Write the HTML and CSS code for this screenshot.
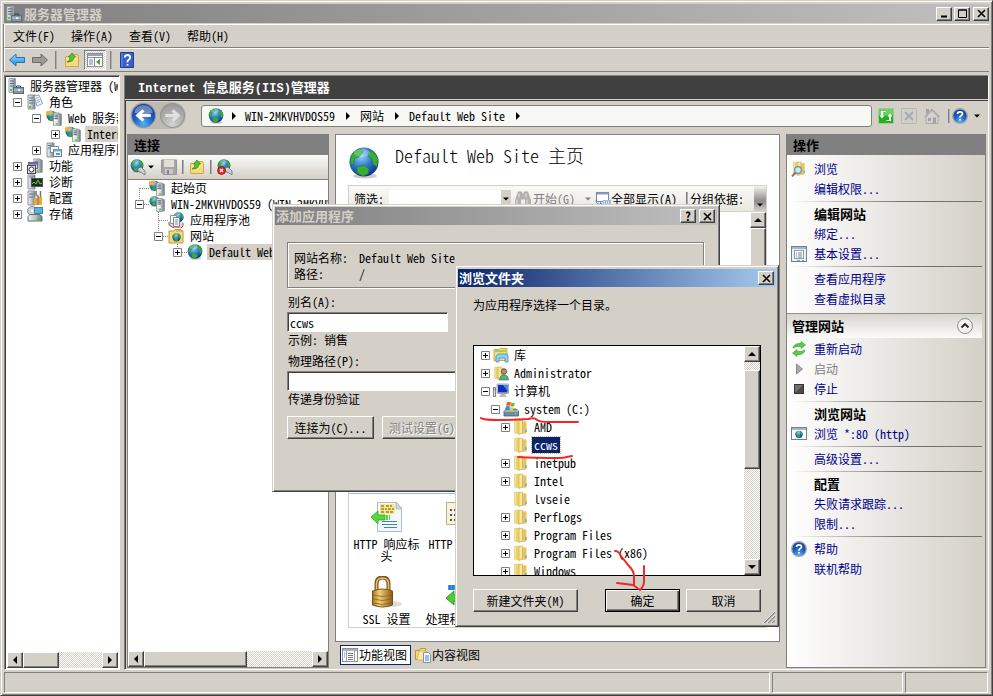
FILE: index.html
```html
<!DOCTYPE html>
<html lang="zh-CN">
<head>
<meta charset="utf-8">
<meta name="viewport" content="width=device-width, initial-scale=1">
<title>服务器管理器</title>
<link rel="stylesheet" href="styles.css">
</head>
<body>
<svg class="defs" aria-hidden="true">
  <defs>
    <radialGradient id="sea" cx="0.4" cy="0.3" r="0.75"><stop offset="0" stop-color="#8fd4f5"/><stop offset="0.5" stop-color="#2f78d0"/><stop offset="1" stop-color="#102a86"/></radialGradient>
    <radialGradient id="blueball" cx="0.5" cy="0.85" r="0.85"><stop offset="0" stop-color="#4fb4f5"/><stop offset="0.5" stop-color="#1c5cc4"/><stop offset="1" stop-color="#16367f"/></radialGradient>
    <radialGradient id="grayball" cx="0.5" cy="0.85" r="0.85"><stop offset="0" stop-color="#d2d2d2"/><stop offset="0.6" stop-color="#acacac"/><stop offset="1" stop-color="#989898"/></radialGradient>
    <linearGradient id="gold" x2="1"><stop offset="0" stop-color="#fbeeab"/><stop offset="0.5" stop-color="#e9cb62"/><stop offset="1" stop-color="#f7e28c"/></linearGradient>
    <linearGradient id="steel" x2="1"><stop offset="0" stop-color="#f2f4f5"/><stop offset="0.6" stop-color="#b3babf"/><stop offset="1" stop-color="#70787e"/></linearGradient>
    <linearGradient id="brass" x2="1"><stop offset="0" stop-color="#a8741c"/><stop offset="0.35" stop-color="#f0cf7a"/><stop offset="1" stop-color="#8a5a12"/></linearGradient>
    <linearGradient id="bluearrow" y2="1" x2="0"><stop offset="0" stop-color="#8fe0ff"/><stop offset="1" stop-color="#1a86d8"/></linearGradient>
  </defs>
  <symbol id="globe" viewBox="0 0 32 32"><ellipse cx="17" cy="29" rx="12" ry="2.5" fill="#999" opacity="0.5"/><circle cx="16" cy="15" r="14.5" fill="url(#sea)"/><path d="M3 9Q7 2 13 2l2 3-4 5-4 1-2 7-3-2zM22 3q6 3 8 9l-1 8-4-3-1-5-4-3zM9 20l7-2 5 4-1 5-5 2-6-3z" fill="#39ad35" stroke="#1d7f39" stroke-width="0.7"/><ellipse cx="14" cy="6" rx="8" ry="4" fill="#fff" opacity="0.25"/></symbol>
  <symbol id="server" viewBox="0 0 16 16"><path d="M4 1h6l3 1.5V15l-3 1H4z" fill="url(#steel)" stroke="#7c858a" stroke-width="0.8"/><path d="M5 3.5h4M5 5.5h4M5 7.5h4" stroke="#5d666c"/><path d="M5 9.5h4M5 11.5h4" stroke="#fff"/><rect x="7" y="13" width="2" height="1.5" fill="#4fcf2c"/></symbol>
  <symbol id="server-case" viewBox="0 0 16 16"><path d="M1 0.5h6.500v14H1z" fill="url(#steel)" stroke="#9aa3a8"/><path d="M2 3h4M2 5.500h4M2 8h4" stroke="#4f6d7d"/><rect x="2" y="11" width="2" height="2" fill="#4fcf2c"/><path d="M8.500 9.500V8h4v1.500" fill="none" stroke="#333d45"/><rect x="5.500" y="9.500" width="10" height="6" fill="#8296a4" stroke="#5b6b77"/><path d="M6 12h9" stroke="#c8d4dc"/><path d="M10 11h2v2h-2z" fill="#eee"/></symbol>
  <symbol id="server-doc" viewBox="0 0 16 16"><path d="M1 1h7v14H1z" fill="url(#steel)" stroke="#8c959a"/><path d="M2 4h4M2 6.500h4M2 9h4" stroke="#65747d"/><rect x="2" y="12" width="2" height="2" fill="#4fcf2c"/><path d="M7 2l5-1 3.500 8.500-5.500 2.500z" fill="#eaf4fc" stroke="#7292aa" stroke-width="0.8"/><path d="M8.500 4.500l3-1M9.500 6.500l3-1M10 8.500l3-1" stroke="#5f96c2" stroke-width="0.7"/></symbol>
  <symbol id="globe-server" viewBox="0 0 16 16"><use href="#globe" x="0" y="0" width="11" height="12"/><path d="M0 1.500l4-1 3 1.500-3 2.500-4 1z" fill="#f2b22c"/><use href="#server" x="4" y="2" width="14" height="14"/></symbol>
  <symbol id="globe-host" viewBox="0 0 16 16"><use href="#globe" x="0" y="0" width="11" height="11"/><use href="#server" x="4" y="1" width="14" height="15"/></symbol>
  <symbol id="server-app" viewBox="0 0 16 16"><path d="M1 1h7v14H1z" fill="url(#steel)" stroke="#8c959a"/><path d="M2 3.500h4M2 6h4" stroke="#65747d"/><rect x="4.500" y="4.500" width="8" height="6" fill="#fff" stroke="#7c8fa0"/><rect x="7.500" y="7.500" width="8" height="7" fill="#edf5fc" stroke="#6582a0"/><path d="M8 8.500h7" stroke="#83a7cf" stroke-width="2"/><rect x="10" y="11" width="4" height="2" fill="#5b9ad8"/></symbol>
  <symbol id="feature" viewBox="0 0 16 16"><use href="#server" x="3" y="0" width="15" height="15"/><rect x="1.500" y="4.500" width="9" height="6" fill="#d9d9ee" stroke="#6a6aa0"/><path d="M2 5.500h8" stroke="#6565b2" stroke-width="2"/><rect x="0.500" y="7.500" width="8" height="8" fill="#e8e8e8" stroke="#444"/><circle cx="4.500" cy="11.500" r="2.500" fill="#fff" stroke="#333"/></symbol>
  <symbol id="diag" viewBox="0 0 16 16"><path d="M1 1h7v14H1z" fill="url(#steel)" stroke="#8c959a"/><path d="M2 3h4" stroke="#65747d"/><rect x="4.500" y="4.500" width="11" height="8" fill="#1d2d18" stroke="#556"/><path d="M5 10l2-2 2 2 2-4 2 4 2-1" fill="none" stroke="#66d43d"/></symbol>
  <symbol id="config" viewBox="0 0 16 16"><path d="M1 1h7v14H1z" fill="url(#steel)" stroke="#8c959a"/><path d="M2 4h4M2 7h4" stroke="#65747d"/><path d="M9 1v4l2 1v9" fill="none" stroke="#8c9499" stroke-width="2"/><path d="M13.500 1v6" stroke="#777" stroke-width="1.500"/><path d="M13.500 7v8M8.500 8v7" stroke="#f2a916" stroke-width="3"/></symbol>
  <symbol id="storage" viewBox="0 0 16 16"><circle cx="5" cy="5" r="4.500" fill="#cbd3d6" stroke="#859297"/><circle cx="5" cy="5" r="1.300" fill="#fff"/><rect x="7.500" y="1.500" width="8" height="6" fill="#49b9eb" stroke="#597e91"/><path d="M1 10.500l2-2h10l2 2v4.500H1z" fill="url(#steel)" stroke="#67737a"/><rect x="10" y="12" width="3" height="1.500" fill="#43cc26"/></symbol>
  <symbol id="folder" viewBox="0 0 16 16"><path d="M1.500 1.500L7 1v14l-5.500-1z" fill="url(#gold)" stroke="#dfc264" stroke-width="0.6"/><path d="M7 2l6.500 0.500v12L7 15z" fill="#e3c664"/><path d="M6 1.500L9.500 1v13L6 15.500z" fill="#f9e9a0" stroke="#c7a33c" stroke-width="0.6"/><path d="M12.500 10h1v3h-1z" fill="#3f9edc"/></symbol>
  <symbol id="folder-up" viewBox="0 0 16 16"><path d="M1.500 4.500h5l1-2h6l1 2v10h-13z" fill="#f6da7b" stroke="#d0a84a"/><path d="M2 7h12" stroke="#fff1b5"/><path d="M3 10q3-1 3-5H4.500L8 1l3.500 4H10q0 5-7 5z" fill="#57c42d" stroke="#2a861c" stroke-width="0.7"/></symbol>
  <symbol id="folder-web" viewBox="0 0 16 16"><path d="M1 3h5l1-1.500h6L14 3h1v12H1z" fill="#f6da7b" stroke="#c3962d"/><path d="M8 3h6" stroke="#e88c43"/><use href="#globe" x="4" y="5" width="9" height="9"/></symbol>
  <symbol id="library" viewBox="0 0 16 16"><path d="M1 2.500h5l1-1h7v12H1z" fill="#f6da7b" stroke="#cfaa42"/><path d="M2 4h11" stroke="#5bbf45"/><path d="M3 15V9l2-2h9l1 2v6h-3v-4H6v4z" fill="#8bd2f5" stroke="#4294c7" stroke-width="0.8"/></symbol>
  <symbol id="user-folder" viewBox="0 0 16 16"><use href="#folder" width="14" height="16"/><circle cx="11" cy="6.500" r="2.700" fill="#bb8b63" stroke="#5f4936" stroke-width="0.8"/><path d="M6.500 15q0-5 4.500-5t4.500 5z" fill="#58ae8b" stroke="#397d62" stroke-width="0.7"/></symbol>
  <symbol id="computer" viewBox="0 0 16 16"><rect x="0.500" y="4.500" width="2" height="9" fill="#ddd" stroke="#888"/><rect x="4" y="1" width="11.500" height="9.500" rx="0.500" fill="#d6dade" stroke="#80888f" stroke-width="0.700"/><path d="M5 2h9.500v7.500H5z" fill="#1230be"/><path d="M10 2h4.500v6z" fill="#4f88ea"/><path d="M8 11h4l2 3H6z" fill="#b9bdc3"/><path d="M1 6h1v1H1z" fill="#3c3"/></symbol>
  <symbol id="drive" viewBox="0 0 16 16"><path d="M1 10l2-2h10l2.500 2v5H1z" fill="#708ea2" stroke="#445b69" stroke-width="0.800"/><path d="M1 10h14" stroke="#c8dbe7"/><path d="M12 12h2v1.500h-2z" fill="#43e626"/><path d="M4 1.500q2-1.500 4 0L7 5Q5 4 3 5z" fill="#eb5b2b"/><path d="M8.500 1.500q2 1 3.500 0L11 5Q9 6 7.500 5z" fill="#62bb3d"/><path d="M3 5.500q2-1 4 0L6 9Q4 8 2 9z" fill="#3a87dd"/><path d="M7.500 6q2 1 3.500 0L10 9Q8 10 6.500 9z" fill="#fac829"/></symbol>
  <symbol id="pool" viewBox="0 0 16 16"><use href="#globe" x="5" y="0" width="11" height="11"/><path d="M1 10v3l5 3h7l2-2v-3" fill="#e6d6d6" stroke="#c54040"/><path d="M2.500 3.500h6v8h-6z" fill="#fff" stroke="#8297a8"/><path d="M5.500 5.500h6v9h-6z" fill="#f3f8fd" stroke="#70889b"/><path d="M7 8h3M7 10h3M7 12h3" stroke="#8095a5"/></symbol>
  <symbol id="globe-plug" viewBox="0 0 16 16"><use href="#globe" width="14" height="14"/><path d="M8 9l3-1 4 4v4l-3-2-4-2z" fill="#ccd1d4" stroke="#697277" stroke-width="0.800"/></symbol>
  <symbol id="globe-cut" viewBox="0 0 16 16"><use href="#globe-plug" width="16" height="16"/><circle cx="4.500" cy="11.500" r="4" fill="#da2626" stroke="#8b0d0d" stroke-width="0.600"/><path d="M3 10l3 3m0-3l-3 3" stroke="#fff" stroke-width="1.300"/></symbol>
  <symbol id="disk" viewBox="0 0 16 16"><path d="M0.500 1h15v14.500h-13l-2-2z" fill="#a6a6a6" stroke="#989898"/><path d="M3 1h10v7H3z" fill="#e2dfd8"/><path d="M4 10h8v5H4z" fill="#c8c8c8"/><path d="M6 11h2v4H6z" fill="#888"/></symbol>
  <symbol id="arrow-l" viewBox="0 0 16 14"><path d="M0.500 7L7 1v3.500h8.500v5H7V13z" fill="url(#bluearrow)" stroke="#2a6fae"/></symbol>
  <symbol id="arrow-r" viewBox="0 0 16 14"><path d="M15.500 7L9 1v3.500H0.500v5H9V13z" fill="#999" stroke="#6b6b6b"/></symbol>
  <symbol id="panel" viewBox="0 0 16 14"><rect x="0.500" y="0.500" width="15" height="13" fill="#fff" stroke="#8c8c8c"/><path d="M1 2h14" stroke="#8ea5c5" stroke-width="2"/><path d="M1 4.500h14M7.500 5v8" stroke="#8c8c8c"/><path d="M2 7h4M2 9h4M2 11h4" stroke="#5a84b8"/><path d="M13 6v6l-4-3z" fill="#42a62e"/></symbol>
  <symbol id="help-book" viewBox="0 0 14 16"><path d="M0.500 0.500h13v15h-13z" fill="#3560cc" stroke="#243f98"/><path d="M2 1v14" stroke="#6c92ea"/><path d="M4.800 5.500Q5 3 7.500 3T10.200 5.500Q10 7 8.500 8T7.500 10.500M7.500 12v1.500" fill="none" stroke="#fff" stroke-width="1.800"/></symbol>
  <symbol id="help-ball" viewBox="0 0 16 16"><circle cx="8" cy="8" r="7.300" fill="url(#blueball)" stroke="#a3a7ad" stroke-width="1.400"/><path d="M5.500 6Q5.500 3.800 8 3.800T10.500 6Q10.300 7 9 7.800T8 9.700M8 11v1.600" fill="none" stroke="#fff" stroke-width="1.700"/></symbol>
  <symbol id="refresh" viewBox="0 0 16 16"><rect x="0.500" y="0.500" width="15" height="15" fill="#1fb41c" stroke="#a4c79f"/><path d="M1 1h14v6q-7 1-14 0z" fill="#6fce66"/><path d="M7.500 4H5v3.500H6.500L4 10.500 1.500 7.500H3V3h4.500zM8.500 12H11V8.500H9.500L12 5.500l2.500 3H13V13H8.500z" fill="#fff"/></symbol>
  <symbol id="stop" viewBox="0 0 16 16"><rect x="0.500" y="0.500" width="15" height="15" rx="1" fill="#d0cfcb" stroke="#b6b5b1"/><path d="M4 4l8 8m0-8l-8 8" stroke="#aaa" stroke-width="2"/></symbol>
  <symbol id="home" viewBox="0 0 16 16"><path d="M2 8v7.500h12V8L8 2z" fill="#d3d1cd" stroke="#aaa"/><path d="M0 8.500L8 0.500l8 8-1.500 1L8 3 1.500 9.500z" fill="#aaa"/><path d="M2 1h3v3l-3 2zM4 10h3v3H4zM9 9.500h3V15H9z" fill="#a2a2a2"/></symbol>
  <symbol id="binoc" viewBox="0 0 16 15"><path d="M3 0h4l1 3 1-3h4l3 9v5h-6V8H6v6H0V9z" fill="#b1b1af"/><path d="M2 8v5M12 8v5M4 2v4M11 2v4" stroke="#d6d4cf" stroke-width="1.500"/></symbol>
  <symbol id="show-all" viewBox="0 0 16 16"><rect x="1.500" y="1.500" width="12" height="9" fill="#fff" stroke="#6e88a5"/><path d="M2 2.500h11" stroke="#88a0bd" stroke-width="2"/><path d="M0 7q0 5 5 6v-2l4 3-4 2v-2Q0 13 0 7z" fill="#2c8dd4"/><path d="M8 9h8v6H8z" fill="#9fbde3"/><path d="M9 11h6M9 13h6" stroke="#fff" stroke-dasharray="1 1"/></symbol>
  <symbol id="browse" viewBox="0 0 16 16"><use href="#folder" x="1" width="15" height="15"/><circle cx="7" cy="9" r="3.300" fill="#c7eafc" stroke="#728fa5" stroke-width="1.200"/><path d="M4.500 11.500L1 15.500" stroke="#857c77" stroke-width="2"/></symbol>
  <symbol id="settings" viewBox="0 0 16 16"><rect x="0.500" y="0.500" width="15" height="15" fill="#edf1f4" stroke="#72808e"/><path d="M1 2h14" stroke="#a3b6ca" stroke-width="2"/><rect x="3.500" y="4.500" width="9" height="8" fill="#fff" stroke="#8d9aa5"/><path d="M5 7h1m1 0h4M5 9h1m1 0h4M5 11h1m1 0h4" stroke="#718296"/><path d="M6 14.500h3m2 0h2" stroke="#44c2ee"/></symbol>
  <symbol id="restart" viewBox="0 0 16 16"><path d="M2 7q1-5 8-4.500V0.500l4.500 3.500L10 7.500v-2Q5 5 2 7z" fill="#57ce43" stroke="#2f9d2b" stroke-width="0.600"/><path d="M14 9q-1 5-8 4.500v2L1.500 12 6 8.500v2q5 0.500 8-1.500z" fill="#57ce43" stroke="#2f9d2b" stroke-width="0.600"/></symbol>
  <symbol id="play" viewBox="0 0 16 16"><path d="M5.500 3l6 5-6 5z" fill="#aaa" stroke="#8c8c8c"/></symbol>
  <symbol id="halt" viewBox="0 0 16 16"><rect x="3.500" y="3.500" width="9" height="9" fill="#4b4b4b" stroke="#353535"/><path d="M4 4h8L4 12z" fill="#707070"/></symbol>
  <symbol id="web-page" viewBox="0 0 16 16"><rect x="0.500" y="1.500" width="15" height="12" fill="#fff" stroke="#72808e"/><path d="M1 3h14" stroke="#a3b6ca" stroke-width="2"/><use href="#globe" x="4" y="4.500" width="8" height="8"/></symbol>
  <symbol id="content-view" viewBox="0 0 16 16"><path d="M0.500 3.500h4l1-2h5v11h-10z" fill="#f6da7b" stroke="#c3962d"/><path d="M4 4h7v9H2z" fill="#fbe9a6" stroke="#cda843" stroke-width="0.700"/><path d="M8.500 5.500h5l2 2v8h-7z" fill="#f5faff" stroke="#7b95ac"/><path d="M10 9h4M10 11h4M10 13h4" stroke="#3d86cf"/></symbol>
  <symbol id="feature-view" viewBox="0 0 16 16"><rect x="0.500" y="1.500" width="15" height="13" fill="#fff" stroke="#8f8f8f"/><path d="M1 3h14" stroke="#a5b3c1" stroke-width="2"/><path d="M4.500 4v10M12.500 4v10" stroke="#999"/><path d="M6 6.500h5M6 8.500h5M6 10.500h5M6 12.500h5" stroke="#777"/><path d="M2 6h1m-1 2h1m-1 2h1" stroke="#5a84b8"/></symbol>
  <symbol id="http-response" viewBox="0 0 32 32"><path d="M6.500 1.500h19l5 6v23h-24z" fill="#f2f8fd" stroke="#aebdc9"/><path d="M25 1l6 7h-6z" fill="#d0d6db" stroke="#9eabb5" stroke-width="0.700"/><path d="M9 3h15v10H9z" fill="#ffe77a"/><path d="M10 5h4m1 0h6M10 8h6m1 0h6M10 11h4m1 0h7" stroke="#595535" stroke-dasharray="3 1"/><path d="M11 20.500h15M11 23.500h15M13 26.500h13" stroke="#3f7fc4"/><path d="M0 16l7-6v4h7v5H7v4z" fill="#5ad83a" stroke="#2ca71f" stroke-width="0.800"/><path d="M15 14h2v5h-2zm3 0h1v5h-1z" fill="#5ad83a"/></symbol>
  <symbol id="redirect" viewBox="0 0 32 32"><path d="M0.500 1.500h22v22h-22z" fill="#f9f2db" stroke="#b7ae91"/><path d="M4 9h2m2 0h2M4 14h2m2 0h2M4 19h2m2 0h2" stroke="#555" stroke-width="2"/></symbol>
  <symbol id="handler" viewBox="0 0 32 32"><path d="M2 9h16v5H2z" fill="#419bdf"/><path d="M4 9v5m3-5v5" stroke="#1664a6"/><path d="M0 22l8-7v4h8v6H8v4z" fill="#4ccc32" stroke="#2c9c20"/></symbol>
  <symbol id="lock" viewBox="0 0 32 32"><ellipse cx="20" cy="28" rx="11" ry="3" fill="#bbb" opacity="0.500"/><path d="M5.500 16V8q0-6.500 6-6.500t6 6.500v8" fill="none" stroke="#805716" stroke-width="4"/><path d="M5.500 16V8q0-6 6-6t6 6v8" fill="none" stroke="#dfc181" stroke-width="1.500"/><path d="M1.500 15q10-4 20 0v14q-10 4-20 0z" fill="url(#brass)" stroke="#76500f"/><path d="M2 19q9 3 19 0M2 23q9 3 19 0M2 27q9 3 19 0" fill="none" stroke="#8e6119" stroke-width="0.800"/></symbol>
  <symbol id="plus" viewBox="0 0 9 9"><path d="M0.500 0.500h8v8h-8z" fill="#fff" stroke="#808080"/><path d="M2 4.500h5M4.500 2v5" stroke="#000"/></symbol>
  <symbol id="minus" viewBox="0 0 9 9"><path d="M0.500 0.500h8v8h-8z" fill="#fff" stroke="#808080"/><path d="M2 4.500h5" stroke="#000"/></symbol>
  <symbol id="line-start" viewBox="0 0 19 16"><path d="M9.500 8v8M10 8.500h9" stroke="#888" stroke-dasharray="1 1"/></symbol>
  <symbol id="line-tee" viewBox="0 0 19 16"><path d="M9.500 0v16M10 8.500h9" stroke="#888" stroke-dasharray="1 1"/></symbol>
  <symbol id="line-end" viewBox="0 0 19 16"><path d="M9.500 0v8M10 8.500h9" stroke="#888" stroke-dasharray="1 1"/></symbol>
  <symbol id="tri-l" viewBox="0 0 8 8"><path d="M6 0v8L2 4z"/></symbol>
  <symbol id="tri-r" viewBox="0 0 8 8"><path d="M2 0v8l4-4z"/></symbol>
  <symbol id="tri-u" viewBox="0 0 8 8"><path d="M0 6h8L4 2z"/></symbol>
  <symbol id="tri-d" viewBox="0 0 8 8"><path d="M0 2h8L4 6z"/></symbol>
  <symbol id="cross" viewBox="0 0 9 9"><path d="M1 1l7 7M8 1L1 8" stroke="#000" stroke-width="1.600"/></symbol>
</svg>

<div class="window">
  <header class="titlebar inactive">
    <svg class="i16"><use href="#server-case"/></svg>
    <h1>服务器管理器</h1>
    <button class="cap" aria-label="最小化"><svg viewBox="0 0 9 9"><path d="M1 7.500h6" stroke="#000" stroke-width="2"/></svg></button>
    <button class="cap" aria-label="最大化"><svg viewBox="0 0 9 9"><path d="M0.500 1h8v7.500h-8zM0 1h9" fill="none" stroke="#000"/></svg></button>
    <button class="cap last" aria-label="关闭"><svg><use href="#cross"/></svg></button>
  </header>
  <nav class="menubar">
    <button>文件(F)</button><button>操作(A)</button><button>查看(V)</button><button>帮助(H)</button>
  </nav>
  <div class="toolbar">
    <button aria-label="后退"><svg class="i16"><use href="#arrow-l"/></svg></button>
    <button aria-label="前进"><svg class="i16"><use href="#arrow-r"/></svg></button>
    <i class="bar"></i>
    <button aria-label="向上"><svg class="i16"><use href="#folder-up"/></svg></button>
    <button class="pressed" aria-label="显示控制台树"><svg class="i16"><use href="#panel"/></svg></button>
    <i class="bar"></i>
    <button aria-label="帮助"><svg class="i16"><use href="#help-book"/></svg></button>
  </div>

  <main class="panes">
    <section class="console">
      <ul class="tree">
        <li><svg class="i16"><use href="#server-case"/></svg><span>服务器管理器 (WIN-2MKVHVDOS59)</span></li>
        <li class="l1"><button class="box" aria-label="折叠"><svg><use href="#minus"/></svg></button><svg class="i16"><use href="#server-doc"/></svg><span>角色</span></li>
        <li class="l2"><button class="box" aria-label="折叠"><svg><use href="#minus"/></svg></button><svg class="i16"><use href="#globe-server"/></svg><span>Web 服务器(IIS)</span></li>
        <li class="l3"><button class="box" aria-label="展开"><svg><use href="#plus"/></svg></button><svg class="i16"><use href="#globe-server"/></svg><span class="picked">Internet 信息服务</span></li>
        <li class="l2"><button class="box" aria-label="展开"><svg><use href="#plus"/></svg></button><svg class="i16"><use href="#server-app"/></svg><span>应用程序服务器</span></li>
        <li class="l1"><button class="box" aria-label="展开"><svg><use href="#plus"/></svg></button><svg class="i16"><use href="#feature"/></svg><span>功能</span></li>
        <li class="l1"><button class="box" aria-label="展开"><svg><use href="#plus"/></svg></button><svg class="i16"><use href="#diag"/></svg><span>诊断</span></li>
        <li class="l1"><button class="box" aria-label="展开"><svg><use href="#plus"/></svg></button><svg class="i16"><use href="#config"/></svg><span>配置</span></li>
        <li class="l1"><button class="box" aria-label="展开"><svg><use href="#plus"/></svg></button><svg class="i16"><use href="#storage"/></svg><span>存储</span></li>
      </ul>
      <div class="hscroll"><button aria-label="向左"><svg><use href="#tri-l"/></svg></button><i class="thumb narrow"></i><i class="track"></i><button aria-label="向右"><svg><use href="#tri-r"/></svg></button></div>
    </section>

    <section class="iis">
      <h2 class="iis-title"><span class="mono">Internet </span>信息服务<span class="mono">(IIS)</span>管理器</h2>
      <div class="iis-body">
        <div class="navrow">
          <div class="rockers">
            <button aria-label="后退"><svg viewBox="0 0 24 24"><circle cx="12" cy="12" r="11.500" fill="url(#blueball)" stroke="#8e98a8"/><path d="M3 9Q5 2 12 2t9 7q-9 4-18 0z" fill="#fff" opacity="0.350"/><path d="M19 12H7m5-5l-5.500 5L12 17" fill="none" stroke="#fff" stroke-width="3"/></svg></button>
            <button aria-label="前进"><svg viewBox="0 0 24 24"><circle cx="12" cy="12" r="11.500" fill="url(#grayball)" stroke="#959595"/><path d="M5 12h12m-5-5l5.500 5-5.500 5" fill="none" stroke="#e0e0e0" stroke-width="3"/></svg></button>
          </div>
          <div class="address">
            <svg class="i16"><use href="#globe"/></svg><svg class="tri"><use href="#tri-r"/></svg>
            <a href="#">WIN-2MKVHVDOS59</a><svg class="tri"><use href="#tri-r"/></svg>
            <a href="#">网站</a><svg class="tri"><use href="#tri-r"/></svg>
            <a href="#">Default Web Site</a><svg class="tri"><use href="#tri-r"/></svg>
          </div>
          <div class="navtools">
            <button aria-label="刷新"><svg class="i16"><use href="#refresh"/></svg></button>
            <button aria-label="停止"><svg class="i16"><use href="#stop"/></svg></button>
            <button aria-label="主页"><svg class="i16"><use href="#home"/></svg></button>
            <i class="bar"></i>
            <button aria-label="帮助"><svg class="i16"><use href="#help-ball"/></svg></button>
            <svg class="caret"><use href="#tri-d"/></svg>
          </div>
        </div>

        <div class="columns">
          <section class="connections">
            <h3 class="head">连接</h3>
            <div class="conn-tools">
              <button aria-label="连接"><svg class="i16"><use href="#globe-plug"/></svg></button><svg class="caret"><use href="#tri-d"/></svg>
              <button aria-label="保存"><svg class="i16"><use href="#disk"/></svg></button><i class="bar"></i>
              <button aria-label="向上"><svg class="i16"><use href="#folder-up"/></svg></button><i class="bar"></i>
              <button aria-label="断开"><svg class="i16"><use href="#globe-cut"/></svg></button>
            </div>
            <ul class="tree lined">
              <li class="l1"><svg class="line"><use href="#line-start"/></svg><svg class="i16"><use href="#globe-server"/></svg><span>起始页</span></li>
              <li class="l1"><button class="box" aria-label="折叠"><svg class="line"><use href="#line-end"/></svg><svg><use href="#minus"/></svg></button><svg class="i16"><use href="#globe-host"/></svg><span>WIN-2MKVHVDOS59 (WIN-2MKVHVDOS59)</span></li>
              <li class="l2"><svg class="line"><use href="#line-tee"/></svg><svg class="i16"><use href="#pool"/></svg><span>应用程序池</span></li>
              <li class="l2"><button class="box" aria-label="折叠"><svg class="line"><use href="#line-end"/></svg><svg><use href="#minus"/></svg></button><svg class="i16"><use href="#folder-web"/></svg><span>网站</span></li>
              <li class="l3"><button class="box" aria-label="展开"><svg class="line"><use href="#line-end"/></svg><svg><use href="#plus"/></svg></button><svg class="i16"><use href="#globe"/></svg><span class="picked">Default Web Site</span></li>
            </ul>
            <div class="hscroll"><button aria-label="向左"><svg><use href="#tri-l"/></svg></button><i class="thumb wide"></i><i class="track"></i><button aria-label="向右"><svg><use href="#tri-r"/></svg></button></div>
          </section>

          <section class="center">
            <div class="page">
              <div class="page-head"><svg class="i32"><use href="#globe"/></svg><h2>Default Web Site 主页</h2></div>
              <div class="features">
                <div class="filter">
                  <label for="filter">筛选:</label>
                  <input id="filter" type="text">
                  <button class="drop" aria-label="筛选历史"><svg class="caret"><use href="#tri-d"/></svg></button>
                  <button class="muted" disabled><svg class="i16"><use href="#binoc"/></svg>开始(G)<svg class="caret"><use href="#tri-d"/></svg></button>
                  <button><svg class="i16"><use href="#show-all"/></svg>全部显示(A)</button>
                  <i class="bar"></i><span>分组依据:</span>
                  <button class="more" aria-label="更多"><svg class="caret"><use href="#tri-d"/></svg></button>
                </div>
                <div class="listing">
                  <div class="icons">
                    <figure><svg class="i32"><use href="#http-response"/></svg><figcaption>HTTP 响应标头</figcaption></figure>
                    <figure><svg class="i32"><use href="#redirect"/></svg><figcaption>HTTP 重定向</figcaption></figure>
                    <figure><svg class="i32"><use href="#lock"/></svg><figcaption>SSL 设置</figcaption></figure>
                    <figure><svg class="i32"><use href="#handler"/></svg><figcaption>处理程序映射</figcaption></figure>
                  </div>
                  <div class="vscroll"><button aria-label="向上"><svg><use href="#tri-u"/></svg></button><i class="thumb"></i><button aria-label="向下"><svg><use href="#tri-d"/></svg></button></div>
                </div>
              </div>
            </div>
            <div class="views">
              <button class="on"><svg class="i16"><use href="#feature-view"/></svg>功能视图</button>
              <button><svg class="i16"><use href="#content-view"/></svg>内容视图</button>
            </div>
          </section>

          <aside class="actions">
            <h3 class="head">操作</h3>
            <ul>
              <li><svg class="i16"><use href="#browse"/></svg><a href="#">浏览</a></li>
              <li><a href="#">编辑权限...</a></li>
              <li class="cut"><b>编辑网站</b></li>
              <li><a href="#">绑定...</a></li>
              <li><svg class="i16"><use href="#settings"/></svg><a href="#">基本设置...</a></li>
              <li class="cut"><a href="#">查看应用程序</a></li>
              <li><a href="#">查看虚拟目录</a></li>
            </ul>
            <div class="group"><h4>管理网站</h4><button aria-label="折叠"><svg viewBox="0 0 16 16"><circle cx="8" cy="8" r="7.500" fill="#f3f2ef" stroke="#8f8f8f"/><path d="M4.500 9.500L8 6l3.500 3.500" fill="none" stroke="#222" stroke-width="1.800"/></svg></button></div>
            <ul class="second">
              <li><svg class="i16"><use href="#restart"/></svg><a href="#">重新启动</a></li>
              <li><svg class="i16"><use href="#play"/></svg><span class="dim">启动</span></li>
              <li><svg class="i16"><use href="#halt"/></svg><a href="#">停止</a></li>
              <li class="cut"><b>浏览网站</b></li>
              <li><svg class="i16"><use href="#web-page"/></svg><a href="#">浏览 *:80 (http)</a></li>
              <li class="cut"><a href="#">高级设置...</a></li>
              <li class="cut"><b>配置</b></li>
              <li><a href="#">失败请求跟踪...</a></li>
              <li><a href="#">限制...</a></li>
              <li class="cut"><svg class="i16"><use href="#help-ball"/></svg><a href="#">帮助</a></li>
              <li><a href="#">联机帮助</a></li>
            </ul>
          </aside>
        </div>
      </div>
    </section>
  </main>
  <footer class="status"><span></span><span></span><span></span></footer>
</div>

<section class="dialog add-app" role="dialog" aria-label="添加应用程序">
  <header class="titlebar inactive"><h2>添加应用程序</h2>
    <button class="cap" aria-label="帮助"><b>?</b></button><button class="cap last" aria-label="关闭"><svg><use href="#cross"/></svg></button></header>
  <form class="add-form">
    <dl class="site"><dt>网站名称:</dt><dd>Default Web Site</dd><dt>路径:</dt><dd>/</dd></dl>
    <label for="alias">别名(A):</label>
    <input class="short" id="alias" type="text" value="ccws">
    <p>示例: 销售</p>
    <label for="path">物理路径(P):</label>
    <input id="path" type="text">
    <p>传递身份验证</p>
    <div class="row"><button type="button" class="btn">连接为(C)...</button><button type="button" class="btn" disabled>测试设置(G)...</button></div>
  </form>
</section>

<section class="dialog browse" role="dialog" aria-label="浏览文件夹">
  <header class="titlebar active"><h2>浏览文件夹</h2><button class="cap last" aria-label="关闭"><svg><use href="#cross"/></svg></button></header>
  <div class="browse-body">
    <p>为应用程序选择一个目录。</p>
    <div class="picker">
      <ul class="folders">
        <li><button class="mark" aria-label="展开"><svg><use href="#plus"/></svg></button><svg class="i16"><use href="#library"/></svg><span>库</span></li>
        <li><button class="mark" aria-label="展开"><svg><use href="#plus"/></svg></button><svg class="i16"><use href="#user-folder"/></svg><span>Administrator</span></li>
        <li><button class="mark" aria-label="折叠"><svg><use href="#minus"/></svg></button><svg class="i16"><use href="#computer"/></svg><span>计算机</span></li>
        <li class="d1"><button class="mark" aria-label="折叠"><svg><use href="#minus"/></svg></button><svg class="i16"><use href="#drive"/></svg><span>system (C:)</span></li>
        <li class="d2"><button class="mark" aria-label="展开"><svg><use href="#plus"/></svg></button><svg class="i16"><use href="#folder"/></svg><span>AMD</span></li>
        <li class="d2"><i class="mark"></i><svg class="i16"><use href="#folder"/></svg><span class="chosen">ccws</span></li>
        <li class="d2"><button class="mark" aria-label="展开"><svg><use href="#plus"/></svg></button><svg class="i16"><use href="#folder"/></svg><span>inetpub</span></li>
        <li class="d2"><button class="mark" aria-label="展开"><svg><use href="#plus"/></svg></button><svg class="i16"><use href="#folder"/></svg><span>Intel</span></li>
        <li class="d2"><i class="mark"></i><svg class="i16"><use href="#folder"/></svg><span>lvseie</span></li>
        <li class="d2"><button class="mark" aria-label="展开"><svg><use href="#plus"/></svg></button><svg class="i16"><use href="#folder"/></svg><span>PerfLogs</span></li>
        <li class="d2"><button class="mark" aria-label="展开"><svg><use href="#plus"/></svg></button><svg class="i16"><use href="#folder"/></svg><span>Program Files</span></li>
        <li class="d2"><button class="mark" aria-label="展开"><svg><use href="#plus"/></svg></button><svg class="i16"><use href="#folder"/></svg><span>Program Files (x86)</span></li>
        <li class="d2"><button class="mark" aria-label="展开"><svg><use href="#plus"/></svg></button><svg class="i16"><use href="#folder"/></svg><span>Windows</span></li>
      </ul>
      <div class="vscroll"><button aria-label="向上"><svg><use href="#tri-u"/></svg></button><i class="gap"></i><i class="thumb"></i><i class="track"></i><button aria-label="向下"><svg><use href="#tri-d"/></svg></button></div>
    </div>
    <div class="row"><button class="btn new">新建文件夹(M)</button><button class="btn ok">确定</button><button class="btn">取消</button></div>
  </div>
  <svg class="grip" viewBox="0 0 12 12"><path d="M1 12L12 1M5 12l7-7M9 12l3-3" stroke="#808080" stroke-width="1.500"/><path d="M0 12L12 0M4 12l8-8M8 12l4-4" stroke="#fff" stroke-width="0.700"/></svg>
  <svg class="ink" viewBox="0 0 324 362"><path d="M26 153q2 2 17 2 14 0 30-1 7-2 9 1 3 2 12 2h29M63 192q18 1 40 1 6 0 9-1l5-1M160 286q4 0 6 5 4 5 8 10 5 5 5 10v9M189 301v16q0 4-4 8M162 318q8 1 16 2l7 5"/></svg>
</section>
</body>
</html>
```
FILE: styles.css
```css
* { box-sizing: border-box; }
:root {
  --face: #d4d0c8;
  --shade: #808080;
  --dark: #404040;
  --link: #00008b;
}
body {
  margin: 0;
  height: 100vh;
  overflow: hidden;
  background: var(--face);
  color: #000;
  font: 12px/16px "Noto Sans CJK SC", sans-serif;
  font-feature-settings: "hwid";
}
h1, h2, h3, h4, p, ul, dl, dd, figure { margin: 0; padding: 0; }
ul { list-style: none; }
button, input { font: inherit; font-feature-settings: inherit; color: inherit; }
button { margin: 0; padding: 0; border: 0; background: none; display: flex; align-items: center; flex: none; white-space: nowrap; }
a { color: inherit; text-decoration: none; }
svg { display: block; flex: none; }
.defs { position: absolute; width: 0; height: 0; }
.i16 { width: 16px; height: 16px; }
.i32 { width: 32px; height: 32px; }
.bar { width: 2px; height: 14px; background: var(--shade); border-right: 1px solid #b0aea8; }
.caret { width: 6px; height: 6px; }

.window {
  height: 100%;
  display: flex;
  flex-direction: column;
  padding: 2px 2px 1px;
  border: 1px solid var(--face);
  border-right-color: var(--dark);
  border-bottom-color: var(--dark);
  box-shadow: inset 1px 1px #fff, inset -1px -1px var(--shade);
}
.titlebar {
  display: flex;
  align-items: center;
  flex: none;
  height: 18px;
  padding: 0 2px 0 1px;
  gap: 2px;
}
.window > .titlebar { height: 19px; margin: 1px; padding: 0 0 0 2px; }
.titlebar h1, .titlebar h2 { flex: 1; font-size: 13px; line-height: 18px; }
.inactive { background: linear-gradient(90deg, #808080, #c0c0c0); color: var(--face); }
.active { background: linear-gradient(90deg, #0a246a, #a6caf0); color: #fff; }
.cap {
  width: 16px;
  height: 14px;
  justify-content: center;
  color: #000;
}
.cap svg { width: 9px; height: 9px; }
.cap.last { margin-left: 1px; }
.cap, .btn, .thumb, .hscroll button, .vscroll button {
  background: var(--face);
  border: 1px solid;
  border-color: #fff var(--dark) var(--dark) #fff;
  box-shadow: inset -1px -1px var(--shade);
}

.menubar, .toolbar {
  display: flex;
  align-items: center;
  flex: none;
  height: 24px;
  margin: 0 1px;
  border: 1px solid #fff;
  border-right: 0;
  border-bottom-color: var(--shade);
  box-shadow: -1px 0 var(--shade);
}
.menubar { padding-left: 8px; gap: 16px; }
.toolbar { padding-left: 4px; gap: 7px; }
.toolbar .bar { height: 18px; }
.toolbar .pressed {
  width: 22px;
  height: 20px;
  margin: 0 -3px;
  justify-content: center;
  background: repeating-conic-gradient(#fff 0 25%, var(--face) 0 50%) 0 0 / 2px 2px;
  border: 1px solid;
  border-color: var(--shade) #fff #fff var(--shade);
}

.panes { flex: 1; min-height: 0; display: flex; gap: 4px; margin: 3px 1px 0; }
.console {
  width: 116px;
  flex: none;
  display: flex;
  flex-direction: column;
  background: #fff;
  border: 1px solid;
  border-color: var(--shade) #fff #fff var(--shade);
  box-shadow: inset 1px 1px var(--dark);
  padding: 2px 1px 1px 2px;
}
.tree { flex: 1; min-height: 0; overflow: hidden; padding-left: 1px; }
.tree li { display: flex; align-items: center; height: 16px; white-space: nowrap; }
.tree li > span { padding: 0 2px; margin-left: 4px; }
.tree .l2 { padding-left: 19px; }
.tree .l3 { padding-left: 38px; }
.tree .picked { background: var(--face); }
.box { width: 19px; height: 16px; justify-content: center; position: relative; }
.box svg { width: 9px; height: 9px; position: relative; }
.line, .box .line { width: 19px; height: 16px; }
.box .line { position: absolute; left: 0; top: 0; }
.hscroll, .vscroll {
  display: flex;
  flex: none;
  background: repeating-conic-gradient(#fff 0 25%, var(--face) 0 50%) 0 0 / 2px 2px;
}
.hscroll { height: 16px; }
.vscroll { width: 16px; flex-direction: column; }
.hscroll button, .vscroll button { width: 16px; height: 16px; justify-content: center; }
.hscroll button svg, .vscroll button svg { width: 8px; height: 8px; }
.track { flex: 1; }
.thumb.narrow { width: 36px; }
.thumb.wide { width: 103px; }

.iis { flex: 1; min-width: 0; display: flex; flex-direction: column; border: 1px solid; border-color: var(--shade) #fff #fff var(--shade); }
.iis-title { flex: none; height: 23px; padding-left: 13px; background: var(--dark); color: #fff; font-size: 13px; line-height: 22px; white-space: pre; }
.mono { font: bold 12px "Liberation Mono", monospace; }
.iis-body { flex: 1; min-height: 0; display: flex; flex-direction: column; margin-top: 1px; padding: 0 2px 1px 1px; border-top: 1px solid var(--dark); border-left: 1px solid var(--dark); }
.navrow { flex: none; height: 33px; display: flex; align-items: center; padding: 0 6px 4px 3px; }
.rockers { display: flex; gap: 4px; padding: 1px; border-radius: 14px; background: #bdbab4; }
.rockers svg { width: 25px; height: 25px; }
.address {
  flex: 1;
  height: 22px;
  margin-left: 15px;
  padding-left: 6px;
  display: flex;
  align-items: center;
  background: #f8f8f5;
  border: 1px solid var(--shade);
  border-radius: 3px;
}
.tri { width: 8px; height: 8px; margin: 0 7px 0 6px; }
.address a + .tri { margin: 0 8px 0 9px; }
.navtools { display: flex; align-items: center; gap: 7px; padding-left: 6px; }
.navtools .bar { margin: 0 -5px 0 1px; }
.navtools .caret { margin-left: -1px; }
.columns { flex: 1; min-height: 0; display: flex; gap: 6px; }
.head { flex: none; height: 21px; padding-left: 6px; background: var(--shade); font-size: 13px; line-height: 21px; }
.connections { width: 202px; flex: none; display: flex; flex-direction: column; background: #fff; border: 1px solid var(--shade); border-top: 0; }
.conn-tools { flex: none; height: 25px; display: flex; align-items: center; padding-left: 2px; background: linear-gradient(#fafaf8, var(--face)); border-bottom: 1px solid var(--shade); gap: 5px; }
.conn-tools .caret { margin: 0 2px 0 -3px; }
.lined { padding-left: 2px; }
.center { flex: 1; min-width: 0; display: flex; flex-direction: column; }
.page { flex: 1; min-height: 0; display: flex; flex-direction: column; background: #fff; border: 1px solid var(--shade); padding: 12px 12px 13px; }
.page-head { flex: none; display: flex; gap: 15px; height: 38px; }
.page-head h2 { font-size: 18px; font-weight: 300; line-height: 16px; }
.features { flex: 1; min-height: 0; display: flex; flex-direction: column; border: 1px solid var(--face); }
.filter { flex: none; height: 26px; display: flex; align-items: center; padding-left: 5px; background: linear-gradient(#fafaf8, #e8e6e0); white-space: nowrap; border-bottom: 1px solid var(--face); }
.filter input { flex: 1; min-width: 0; height: 18px; margin-left: 5px; border: 0; background: #fff; }
.drop { width: 10px; height: 18px; justify-content: center; background: var(--face); margin-right: 4px; }
.filter .muted { color: var(--shade); fill: var(--shade); gap: 2px; margin-right: 4px; }
.filter .muted .caret { margin-left: 8px; }
.filter .bar { margin: 0 2px 0 9px; }
.more { align-self: stretch; width: 12px; margin-left: 10px; padding-bottom: 3px; align-items: flex-end; justify-content: center; background: linear-gradient(#f4f3f0, #8c8c8c 60%, var(--face)); }
.listing { flex: 1; min-height: 0; display: flex; }
.listing .thumb { height: 190px; }
.listing .vscroll button:last-child { margin-top: auto; }
.icons { flex: 1; align-self: flex-end; display: grid; grid-template-columns: repeat(2, 75px); grid-auto-rows: 75px; padding-top: 7px; height: 134px; border-top: 1px solid #9ebfe8; }
.icons figure { display: flex; flex-direction: column; align-items: center; }
.icons figcaption { width: 72px; margin-top: 5px; line-height: 12px; text-align: center; }
.views { flex: none; display: flex; gap: 2px; padding: 3px 5px; height: 26px; }
.views button { padding: 0 2px 0 1px; gap: 1px; height: 20px; border: 1px solid transparent; }
.views .on { background: #fff; border-color: #0a246a; padding-right: 3px; }

.actions { width: 200px; flex: none; border: 1px solid var(--shade); border-top: 0; background: linear-gradient(90deg, #fff, #e9e7e3 50%, var(--face)); color: var(--link); }
.actions .head, .actions b, .actions h4 { color: #000; font-size: 13px; }
.actions ul { padding: 4px 3px 0 4px; }
.actions .second { padding-top: 0; }
.actions li { display: grid; grid-template-columns: 16px 1fr; column-gap: 7px; align-items: center; height: 20px; }
.actions li > :only-child { grid-column: 2; }
.actions .cut { height: 25px; padding-top: 5px; background: linear-gradient(90deg, transparent, #707070 60%) 0 2px / 100% 1px no-repeat; }
.actions .dim { color: var(--shade); }
.group { display: flex; align-items: center; justify-content: space-between; height: 25px; margin: 4px 3px 1px 0; padding: 0 9px 0 5px; background: linear-gradient(#d8d5ce, #fbfbf9); border-top: 1px solid #909090; }
.group svg { width: 16px; height: 16px; }
.status { flex: none; height: 21px; margin: 2px 2px 1px 1px; display: flex; gap: 2px; }
.status span { border: 1px solid; border-color: var(--shade) #fff #fff var(--shade); width: 131px; }
.status span:first-child { flex: 1; }
.status span:last-child { width: 83px; }

.dialog { position: absolute; display: flex; flex-direction: column; background: var(--face); border: 1px solid; border-color: var(--face) var(--dark) var(--dark) var(--face); box-shadow: inset 1px 1px #fff, inset -1px -1px var(--shade); padding: 2px; }
.add-app { left: 272px; top: 204px; width: 448px; height: 288px; }
.add-form { display: flex; flex-direction: column; padding: 17px 13px 0 12px; }
.site { display: grid; grid-template-columns: 65px 1fr; padding: 7px 6px 5px; margin-bottom: 6px; border: 1px solid var(--shade); box-shadow: inset 1px 1px #fff, 1px 1px #fff; }
.add-form label, .add-form p { padding-left: 1px; }
.add-form input { width: 313px; height: 20px; margin-top: 2px; padding: 0 2px; background: #fff; border: 1px solid; border-color: var(--shade) #fff #fff var(--shade); box-shadow: inset 1px 1px var(--dark); }
.add-form .short { width: 161px; }
.add-form p { margin-bottom: 5px; }
.add-form .row { margin-top: 4px; display: flex; gap: 8px; }
.btn { height: 23px; min-width: 87px; padding: 0 6px; justify-content: center; }
.btn:disabled { color: var(--shade); text-shadow: 1px 1px #fff; }

.browse { left: 455px; top: 265px; width: 324px; height: 362px; }
.browse .titlebar { margin: 1px 0; }
.browse-body { flex: 1; min-height: 0; display: flex; flex-direction: column; padding: 9px 15px 12px; }
.browse-body p { height: 48px; }
.picker { flex: 1; min-height: 0; display: flex; border: 1px solid #000; background: #fff; }
.folders { flex: 1; overflow: hidden; padding-left: 7px; }
.folders li { display: flex; align-items: center; height: 18px; }
.folders .i16 { margin: 0 3px; }
.folders span { padding: 0 2px; line-height: 16px; }
.folders .d1 { padding-left: 10px; }
.folders .d2 { padding-left: 20px; }
.mark, .mark svg { width: 9px; height: 9px; }
.chosen { background: #0a246a; color: #fff; outline: 1px dotted #e0c060; }
.picker .gap { height: 8px; }
.picker .thumb { height: 99px; }
.browse-body .row { display: flex; margin-top: 13px; gap: 6px; }
.browse-body .btn { min-width: 75px; }
.browse-body .new { width: 105px; margin-right: auto; }
.browse-body .ok { border-color: #000; box-shadow: inset 1px 1px #fff, inset -1px -1px var(--dark), inset -2px -2px var(--shade); }
.grip { position: absolute; right: 3px; bottom: 3px; width: 12px; height: 12px; }
.ink { position: absolute; left: -1px; top: -1px; width: 324px; height: 362px; pointer-events: none; fill: none; stroke: #f02828; stroke-width: 2; stroke-linecap: round; }
```
